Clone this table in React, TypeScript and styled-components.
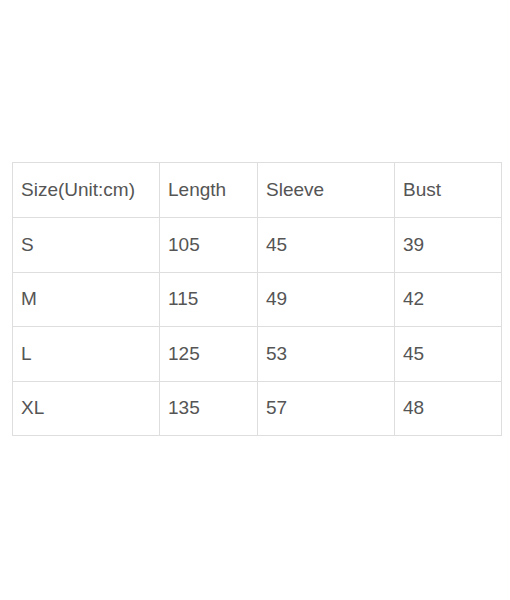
import React from 'react';
import styled, { createGlobalStyle } from 'styled-components';

const GlobalStyle = createGlobalStyle`
    body {
        margin: 0;
        background: #ffffff;
        font-family: "Liberation Sans", Arial, sans-serif;
    }
`;

const Page = styled.div`
    width: 510px;
    height: 600px;
    padding: 162px 0 0 12px;
    box-sizing: border-box;
`;

const Table = styled.table`
    border-collapse: collapse;
    table-layout: fixed;
    width: 489px;
`;

const Row = styled.tr<{ $height: number }>`
    height: ${p => p.$height}px;
`;

const Cell = styled.td<{ $width?: number }>`
    width: ${p => (p.$width ? `${p.$width}px` : 'auto')};
    padding: 0 0 1px 8px;
    border: 1px solid #dedede;
    color: #555555;
    font-size: 19px;
    line-height: 22px;
    vertical-align: middle;
    box-sizing: border-box;
    white-space: nowrap;
`;

const widths = [147, 98, 137, 107];
const heights = [55, 55, 54, 55, 54];

const rows = [
    ['Size(Unit:cm)', 'Length', 'Sleeve', 'Bust'],
    ['S', '105', '45', '39'],
    ['M', '115', '49', '42'],
    ['L', '125', '53', '45'],
    ['XL', '135', '57', '48'],
];

const App = () => (
    <Page>
        <GlobalStyle />
        <Table>
            <tbody>
                {rows.map((row, i) => (
                    <Row key={i} $height={heights[i]}>
                        {row.map((cell, j) => (
                            <Cell key={j} $width={i === 0 ? widths[j] : undefined}>
                                {cell}
                            </Cell>
                        ))}
                    </Row>
                ))}
            </tbody>
        </Table>
    </Page>
);

export default App;
